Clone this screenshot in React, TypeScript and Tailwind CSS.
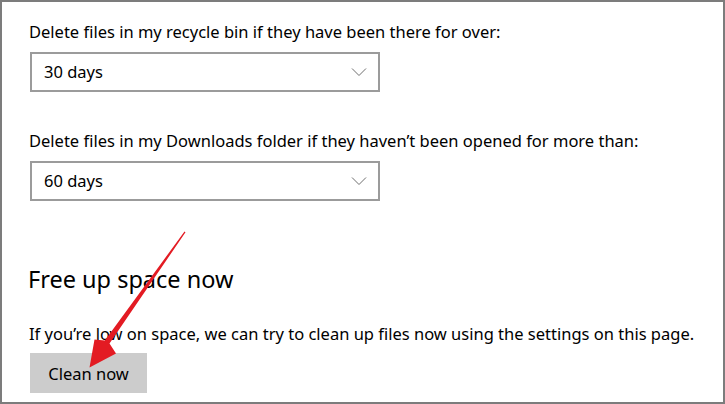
import React from "react";

function Chevron() {
  return (
    <svg width="16" height="10" viewBox="0 0 16 10" className="shrink-0">
      <path d="M1 1.5 L8 8.5 L15 1.5" fill="none" stroke="#6e6e6e" strokeWidth="1" />
    </svg>
  );
}

function Dropdown({ value }: { value: string }) {
  return (
    <div className="flex h-[40px] w-[350px] items-center justify-between border-2 border-[#9b9b9b] bg-white pl-[12px] pr-[11px]">
      <span className="text-[16.5px] leading-[20px] text-black">{value}</span>
      <Chevron />
    </div>
  );
}

export default function App() {
  return (
    <div className="relative h-[404px] w-[725px] overflow-hidden border-2 border-[#7c7c7c] bg-white font-['Noto_Sans',sans-serif] text-black">
      <div className="flex flex-col items-start pl-[28px] pt-[20px]">
        <p className="-ml-[1px] text-[16.5px] leading-[20px]">
          Delete files in my recycle bin if they have been there for over:
        </p>
        <div className="mt-[10px]">
          <Dropdown value="30 days" />
        </div>
        <p className="-ml-[1px] mt-[39px] text-[16.5px] leading-[20px]">
          Delete files in my Downloads folder if they haven’t been opened for more than:
        </p>
        <div className="mt-[10px]">
          <Dropdown value="60 days" />
        </div>
        <h2 className="-ml-[2px] mt-[63px] text-[23.5px] font-normal leading-[30px]">Free up space now</h2>
        <p className="-ml-[1px] mt-[30px] text-[16.5px] leading-[20px]">
          If you’re low on space, we can try to clean up files now using the settings on this page.
        </p>
        <button className="mt-[9px] h-[40px] w-[117px] bg-[#cccccc] pt-[1px] text-center text-[16.5px] leading-[20px] text-black">
          Clean now
        </button>
      </div>
      <svg
        className="pointer-events-none absolute left-[-2px] top-[-2px]"
        width="725"
        height="404"
        viewBox="0 0 725 404"
      >
        <polygon
          points="184.5,231.5 185.5,232.3 109.5,343.5 116,353.5 89.5,367.5 94.5,339.5 104.8,340.5"
          fill="#e31b23"
        />
      </svg>
    </div>
  );
}
